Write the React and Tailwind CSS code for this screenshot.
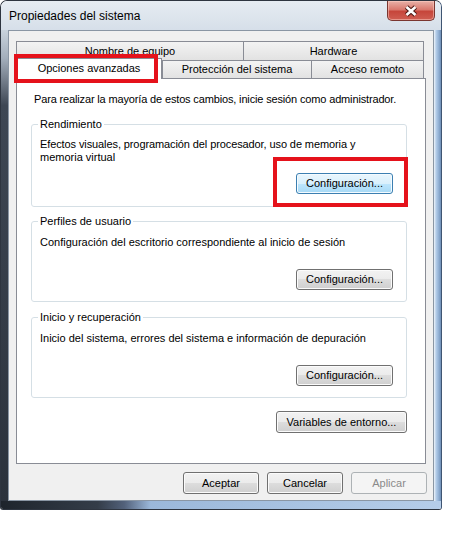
const tabCls =
  "flex items-center justify-center border-[#898c95] bg-[linear-gradient(to_bottom,#f3f3f3,#e2e2e2)] text-[11px] leading-[13px]";
const btnCls =
  "flex items-center justify-center rounded-[3px] border text-[11px] leading-[13px]";
const normalBtn =
  "border-[#707070] bg-[linear-gradient(to_bottom,#f2f2f2_0%,#ebebeb_50%,#dddddd_50%,#cfcfcf_100%)] shadow-[inset_0_0_0_1px_#fbfbfb] text-black";
const hotBtn =
  "border-[#3c7fb1] bg-[linear-gradient(to_bottom,#eaf6fd_0%,#d9f0fc_50%,#bee6fd_50%,#a7d9f5_100%)] shadow-[inset_0_0_0_1px_#f4fbff] text-black";

function Group({ title, className, children }) {
  return (
    <fieldset className={`border border-[#d5dfe5] rounded-[3px] pl-[8px] pr-[13px] ${className}`}>
      <legend className="-ml-[2px] px-[2px] text-[11px] leading-[13px]">{title}</legend>
      {children}
    </fieldset>
  );
}

function CloseGlyph() {
  return (
    <svg width="16" height="12" viewBox="0 0 16 12">
      <path d="M3.5 2 L12.5 10 M12.5 2 L3.5 10" stroke="#4a1712" strokeWidth="4.6" />
      <path d="M3.5 2 L12.5 10 M12.5 2 L3.5 10" stroke="#ffffff" strokeWidth="2.6" />
    </svg>
  );
}

export default function App() {
  return (
    <div className="relative w-[450px] h-[537px] bg-white font-['Liberation_Sans',Arial,sans-serif] text-black">
      {/* ventana */}
      <div className="flex flex-col w-[442px] h-[510px] rounded-t-[7px] rounded-b-[3px] border border-[#2e3540] border-r-[#3f5572] overflow-hidden">
        {/* barra de título */}
        <div className="flex h-[29px] pl-[8px] pr-[6px] bg-[linear-gradient(to_bottom,#e6ecf2,#d6dfe9)]">
          <span className="self-center mt-[1px] text-[12px] leading-[14px]">Propiedades del sistema</span>
          <div className="ml-auto flex items-center justify-center w-[48px] h-[20px] rounded-b-[5px] border border-t-0 border-[#7a3630] bg-[linear-gradient(to_bottom,#e8b1a8_0%,#d9796e_45%,#c6463b_55%,#cf5e52_100%)] shadow-[inset_0_0_0_1px_rgba(255,210,200,0.5)]">
            <CloseGlyph />
          </div>
        </div>

        <div className="flex flex-1">
          <div className="w-[7px] bg-[linear-gradient(to_bottom,#c9d3dd_0%,#a3aebb_6%,#3e4754_16%,#2b323c_100%)]" />

          {/* área cliente */}
          <div className="flex flex-col w-[426px] border border-[#8a96a4] bg-[#f0f0f0] px-[7px] pt-[10px]">
            {/* pestañas fila 1 */}
            <div className="flex h-[19px]">
              <div className={`${tabCls} w-[228px] border-t border-l border-r`}>Nombre de equipo</div>
              <div className={`${tabCls} w-[181px] -ml-px border-t border-l border-r`}>Hardware</div>
            </div>
            {/* pestañas fila 2 */}
            <div className="relative z-10 flex items-end h-[19px]">
              <div className="flex items-center justify-center w-[146px] h-[21px] pb-[2px] bg-white border border-b-0 border-[#898c95] text-[11px] leading-[13px]">
                Opciones avanzadas
              </div>
              <div className={`${tabCls} w-[150px] h-[19px] border`}>Protección del sistema</div>
              <div className={`${tabCls} w-[113px] h-[19px] -ml-px border`}>Acceso remoto</div>
            </div>

            {/* panel */}
            <div className="-mt-px flex flex-col w-[410px] h-[386px] bg-white border border-[#898c95] pl-[14px] pr-[18px] pt-[14px] text-[11px] leading-[13px]">
              <p className="ml-[3px] whitespace-nowrap tracking-[-0.15px]">
                Para realizar la mayoría de estos cambios, inicie sesión como administrador.
              </p>

              <Group title="Rendimiento" className="mt-[12px] pt-[7px] pb-[12px]">
                <p className="tracking-[-0.1px]">Efectos visuales, programación del procesador, uso de memoria y</p>
                <p>memoria virtual</p>
                <div className="flex justify-end mt-[9px]">
                  <button className={`${btnCls} ${hotBtn} w-[97px] h-[21px]`}>Configuración...</button>
                </div>
              </Group>

              <Group title="Perfiles de usuario" className="mt-[8px] pt-[8px] pb-[11px]">
                <p>Configuración del escritorio correspondiente al inicio de sesión</p>
                <div className="flex justify-end mt-[20px]">
                  <button className={`${btnCls} ${normalBtn} w-[97px] h-[21px]`}>Configuración...</button>
                </div>
              </Group>

              <Group title="Inicio y recuperación" className="mt-[9px] pt-[8px] pb-[11px]">
                <p>Inicio del sistema, errores del sistema e información de depuración</p>
                <div className="flex justify-end mt-[20px]">
                  <button className={`${btnCls} ${normalBtn} w-[97px] h-[21px]`}>Configuración...</button>
                </div>
              </Group>

              <div className="flex justify-end mt-[13px]">
                <button className={`${btnCls} ${normalBtn} w-[131px] h-[22px]`}>Variables de entorno...</button>
              </div>
            </div>

            {/* botones inferiores */}
            <div className="flex justify-end gap-[8px] mt-[8px] -mr-px">
              <button className={`${btnCls} ${normalBtn} w-[76px] h-[22px]`}>Aceptar</button>
              <button className={`${btnCls} ${normalBtn} w-[76px] h-[22px]`}>Cancelar</button>
              <button className={`${btnCls} w-[76px] h-[22px] border-[#adb2b5] bg-[#f4f4f4] text-[#8a8a8a]`}>Aplicar</button>
            </div>
          </div>

          <div className="flex-1 bg-[linear-gradient(to_right,#eef4fa_0%,#b4cde9_30%,#8eadd2_70%,#6f8fb6_100%)]" />
        </div>

        <div className="h-[8px] bg-[linear-gradient(to_right,#1e242c_0%,#343d49_22%,#52617a_28%,#9bb8da_34%,#b5cde9_100%)]" />
      </div>

      {/* marcas rojas */}
      <div className="absolute left-[14px] top-[54px] w-[144px] h-[29px] border-4 border-[#e5121b] z-20" />
      <div className="absolute left-[273px] top-[157px] w-[135px] h-[50px] border-4 border-[#e5121b] z-20" />
    </div>
  );
}
